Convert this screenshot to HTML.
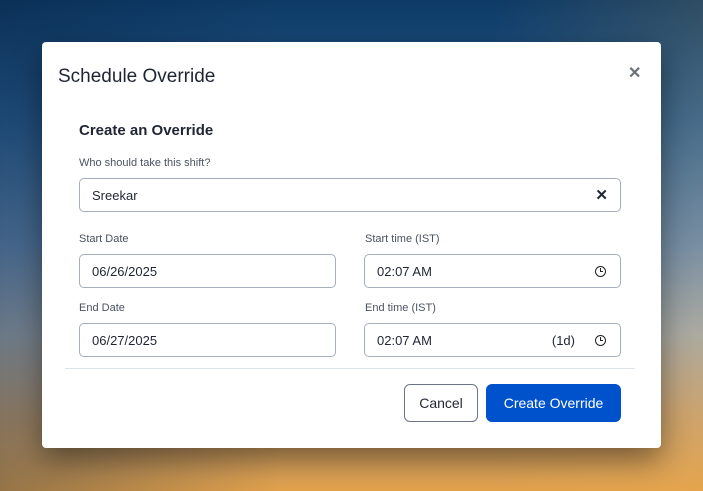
<!DOCTYPE html>
<html><head><meta charset="utf-8"><style>
*{box-sizing:border-box;margin:0;padding:0}
body{width:703px;height:491px;overflow:hidden;position:relative;font-family:"Liberation Sans",sans-serif;
background:linear-gradient(180deg,#0d3a66 0%,#2a5f92 25%,#6488b0 50%,#a0a8ae 68%,#c8a070 85%,#e3a24c 100%);}
.bgl{position:absolute;inset:0;background:linear-gradient(90deg,rgba(5,30,60,.35),rgba(0,0,0,0) 40%,rgba(255,255,255,0) 70%,rgba(240,180,80,.15))}
.modal{position:absolute;left:42px;top:42px;width:619px;height:406px;background:#fff;border-radius:4px;box-shadow:0 12px 30px rgba(0,0,0,.45)}
.title{position:absolute;left:16px;top:24px;font-size:19px;color:#1f2533}
.close{position:absolute;left:586px;top:21px;font-size:16px;color:#6b6f76;font-weight:bold}
h2{position:absolute;left:37px;top:80px;font-size:15px;font-weight:bold;color:#1f2533}
.lbl{position:absolute;font-size:11px;color:#4a5160}
.inp{position:absolute;height:34px;border:1px solid #a4aebd;border-radius:5px;font-size:13px;color:#1f2533;padding:0 12px;display:flex;align-items:center}
.clock{position:absolute;right:14px;top:11px;width:11px;height:11px;border:1.5px solid #222;border-radius:50%}
.clock:after{content:"";position:absolute;left:3.5px;top:1px;width:2.5px;height:3px;border-left:1.4px solid #222;border-bottom:1.4px solid #222}
.sep{position:absolute;left:23px;top:326px;width:570px;height:1px;background:#dde3ea}
.btn{position:absolute;top:342px;height:38px;border-radius:6px;font-size:14px;display:flex;align-items:center;justify-content:center}
</style></head><body><div class="bgl"></div>
<div class="modal">
<div class="title">Schedule Override</div>
<div class="close">✕</div>
<h2>Create an Override</h2>
<div class="lbl" style="left:37px;top:115px">Who should take this shift?</div>
<div class="inp" style="left:37px;top:136px;width:542px">Sreekar<span style="position:absolute;right:12px;font-weight:bold;font-size:15px">✕</span></div>
<div class="lbl" style="left:37px;top:191px">Start Date</div>
<div class="lbl" style="left:323px;top:191px">Start time (IST)</div>
<div class="inp" style="left:37px;top:212px;width:257px">06/26/2025</div>
<div class="inp" style="left:322px;top:212px;width:257px">02:07 AM<span class="clock"></span></div>
<div class="lbl" style="left:37px;top:260px">End Date</div>
<div class="lbl" style="left:323px;top:260px">End time (IST)</div>
<div class="inp" style="left:37px;top:281px;width:257px">06/27/2025</div>
<div class="inp" style="left:322px;top:281px;width:257px">02:07 AM<span style="position:absolute;right:45px">(1d)</span><span class="clock"></span></div>
<div class="sep"></div>
<div class="btn" style="left:362px;width:74px;border:1px solid #6b7585;color:#1f2533">Cancel</div>
<div class="btn" style="left:444px;width:135px;background:#0052cc;color:#fff">Create Override</div>
</div>
</body></html>
